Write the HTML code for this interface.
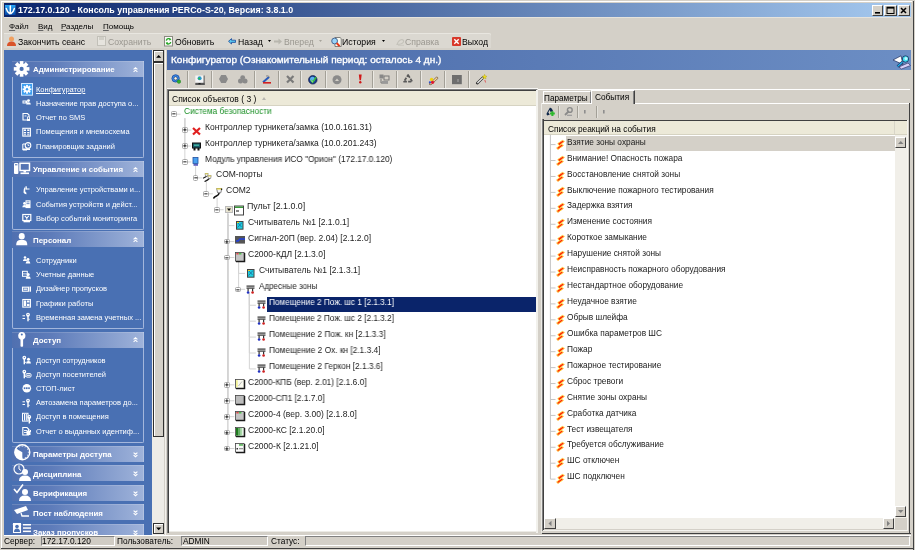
<!DOCTYPE html><html><head><meta charset="utf-8"><style>
*{box-sizing:border-box;margin:0;padding:0}
html,body{width:915px;height:550px;overflow:hidden}
body{position:relative;background:#d4d0c8;font-family:"Liberation Sans",sans-serif;color:#000}
.ab{position:absolute}
.t{position:absolute;white-space:nowrap;line-height:1;will-change:transform}
svg{position:absolute;overflow:visible}
</style></head><body>
<div class="ab" style="left:0px;top:0px;width:915px;height:550px;background:#d4d0c8"></div>
<div class="ab" style="left:1.3px;top:1.3px;width:911px;height:1.2px;background:#fff"></div>
<div class="ab" style="left:1.3px;top:1.3px;width:1.2px;height:547px;background:#fff"></div>
<div class="ab" style="left:913px;top:0.5px;width:1.2px;height:549px;background:#404040"></div>
<div class="ab" style="left:0.5px;top:548px;width:913px;height:1.3px;background:#404040"></div>
<div class="ab" style="left:3.6px;top:3.4px;width:907.4px;height:13.3px;background:linear-gradient(to right,#0a246a,#a6caf0)"></div>
<svg style="left:5.3px;top:4.9px" width="10.5" height="10" viewBox="0 0 10.5 10"><defs><linearGradient id="tg" x1="0" y1="0" x2="0" y2="1"><stop offset="0" stop-color="#28a8f8"/><stop offset="1" stop-color="#0648a8"/></linearGradient></defs><rect x="0" y="0" width="10.5" height="10" fill="url(#tg)"/><path d="M5.3 0.9 V8.6 M1.3 3.6 Q2.2 7.2 4.6 8.6 M9.3 3.6 Q8.4 7.2 6 8.6" stroke="#fff" stroke-width="1.5" fill="none" stroke-linecap="round"/></svg>
<div class="t" style="left:18px;top:5.61px;font-size:8.85px;font-weight:bold;color:#fff">172.17.0.120 - Консоль управления PERCo-S-20, Версия: 3.8.1.0</div>
<div class="ab" style="left:872px;top:4.7px;width:11px;height:11px;border-top:1px solid #fff;border-left:1px solid #fff;border-right:1px solid #404040;border-bottom:1px solid #404040;background:#d4d0c8"></div>
<div class="ab" style="left:884px;top:4.7px;width:12.5px;height:11px;border-top:1px solid #fff;border-left:1px solid #fff;border-right:1px solid #404040;border-bottom:1px solid #404040;background:#d4d0c8"></div>
<div class="ab" style="left:898px;top:4.7px;width:12px;height:11px;border-top:1px solid #fff;border-left:1px solid #fff;border-right:1px solid #404040;border-bottom:1px solid #404040;background:#d4d0c8"></div>
<svg style="left:872px;top:4.7px" width="38" height="11" viewBox="0 0 38 11"><rect x="3" y="7" width="5" height="1.6" fill="#000"/><rect x="15" y="2.2" width="7" height="6.3" fill="none" stroke="#000" stroke-width="1"/><rect x="15" y="2" width="7" height="1.6" fill="#000"/><path d="M29 3 L34 8 M34 3 L29 8" stroke="#000" stroke-width="1.5"/></svg>
<div class="t" style="left:8.9px;top:22.53px;font-size:8px;"><span style="text-decoration:underline;text-decoration-thickness:0.6px;text-underline-offset:1px;text-decoration-color:#666">Ф</span>айл</div>
<div class="t" style="left:37.7px;top:22.53px;font-size:8px;"><span style="text-decoration:underline;text-decoration-thickness:0.6px;text-underline-offset:1px;text-decoration-color:#666">В</span>ид</div>
<div class="t" style="left:61.3px;top:22.53px;font-size:8px;"><span style="text-decoration:underline;text-decoration-thickness:0.6px;text-underline-offset:1px;text-decoration-color:#666">Р</span>азделы</div>
<div class="t" style="left:102.6px;top:22.53px;font-size:8px;"><span style="text-decoration:underline;text-decoration-thickness:0.6px;text-underline-offset:1px;text-decoration-color:#666">П</span>омощь</div>
<div class="ab" style="left:4px;top:17px;width:907px;height:1.3px;background:#e6e3dc"></div>
<div class="ab" style="left:4px;top:33.3px;width:487px;height:15px;background:#dbd8d1;border-radius:0 2px 0 0;box-shadow:inset 0 1px 0 #e8e6e0"></div>
<div class="t" style="left:18px;top:37.64px;font-size:8.7px;color:#000">Закончить сеанс</div>
<div class="t" style="left:108px;top:37.64px;font-size:8.7px;color:#9a9790">Сохранить</div>
<div class="t" style="left:174.8px;top:37.64px;font-size:8.7px;color:#000">Обновить</div>
<div class="t" style="left:237.7px;top:37.64px;font-size:8.7px;color:#000">Назад</div>
<div class="t" style="left:284.2px;top:37.64px;font-size:8.7px;color:#9a9790">Вперед</div>
<div class="t" style="left:342.3px;top:37.64px;font-size:8.7px;color:#000">История</div>
<div class="t" style="left:405px;top:37.64px;font-size:8.7px;color:#9a9790">Справка</div>
<div class="t" style="left:461.6px;top:37.64px;font-size:8.7px;color:#000">Выход</div>
<svg style="left:7px;top:36px" width="9" height="11" viewBox="0 0 9 11"><circle cx="4.5" cy="3" r="2.5" fill="#f0a060"/><path d="M0 10 Q0 5.5 4.5 5.5 Q9 5.5 9 10 Z" fill="#d9532a"/></svg>
<svg style="left:97px;top:36px" width="9" height="10" viewBox="0 0 9 10"><rect x="0.5" y="0.5" width="8" height="9" fill="#e6e4de" stroke="#c2c0b8"/><rect x="2" y="1" width="5" height="3" fill="#d0cec6"/></svg>
<svg style="left:164px;top:36px" width="9" height="10.5" viewBox="0 0 9 10.5"><rect x="0.5" y="0.5" width="8" height="9.5" fill="#fbfbf8" stroke="#8a8a80"/><path d="M2.3 4.6 A2.4 2.4 0 0 1 6.6 3.6" stroke="#28a828" stroke-width="1.4" fill="none"/><path d="M6.7 6 A2.4 2.4 0 0 1 2.4 7" stroke="#28a828" stroke-width="1.4" fill="none"/><path d="M5.5 2.2 L7.4 3.8 L5.2 4.6Z M3.6 8.4 L1.6 6.8 L3.8 6Z" fill="#28a828"/></svg>
<svg style="left:227.8px;top:38.3px" width="8" height="7" viewBox="0 0 8 7"><path d="M0.5 3.3 L3.5 0.6 V2.2 H7.5 V4.4 H3.5 V6 Z" fill="#58c8f0" stroke="#1a4a9a" stroke-width="0.8" stroke-linejoin="round"/></svg>
<svg style="left:268px;top:40px" width="3" height="2" viewBox="0 0 3 2"><path d="M0 0 H3 L1.5 2 Z" fill="#000"/></svg>
<svg style="left:273.5px;top:38px" width="8" height="7" viewBox="0 0 8 7"><path d="M8 3.5 L4.5 0.5 V2.5 H0 V4.5 H4.5 V6.5 Z" fill="#b8b6ae"/></svg>
<svg style="left:318.5px;top:40px" width="3" height="2" viewBox="0 0 3 2"><path d="M0 0 H3 L1.5 2 Z" fill="#a7a49c"/></svg>
<svg style="left:330.5px;top:37px" width="11" height="10" viewBox="0 0 11 10"><path d="M4 0.5 H9 L10.2 1.5 V9.5 H4 Z" fill="#fafaf0" stroke="#555" stroke-width="0.7"/><circle cx="3.6" cy="4" r="2.9" fill="#9ad4f8" stroke="#3a5a8a" stroke-width="0.9"/><path d="M5.6 6 L8.6 9.2" stroke="#e83818" stroke-width="1.9"/></svg>
<svg style="left:381.5px;top:40px" width="3" height="2" viewBox="0 0 3 2"><path d="M0 0 H3 L1.5 2 Z" fill="#000"/></svg>
<svg style="left:395.5px;top:38px" width="9" height="8" viewBox="0 0 9 8"><path d="M1 6.5 Q2.5 2 6 1.5 Q8 2 7.5 4 Q6 6.5 1 6.5 Z" fill="none" stroke="#c4c2ba" stroke-width="1.1"/><path d="M2 7.3 H8" stroke="#c8c6be" stroke-width="0.9"/></svg>
<svg style="left:451.5px;top:36.5px" width="9" height="9" viewBox="0 0 9 9"><rect x="0" y="0" width="9" height="9" rx="1" fill="#d8382a"/><path d="M2.3 2.3 L6.7 6.7 M6.7 2.3 L2.3 6.7" stroke="#fff" stroke-width="1.4"/></svg>
<div class="ab" style="left:152.4px;top:49.6px;width:12.1px;height:485px;background:#eeece7"></div>
<div class="ab" style="left:152.8px;top:50.1px;width:11.6px;height:12.2px;border:1px solid #303030;background:#d4d0c8;box-shadow:inset 1px 1px 0 #fff"></div>
<svg style="left:152.8px;top:50.1px" width="12" height="12" viewBox="0 0 12 12"><path d="M3.1 7.7 H8.3 L5.7 5 Z" fill="#000"/></svg>
<div class="ab" style="left:152.8px;top:61.6px;width:11.6px;height:375.6px;border:1px solid #303030;border-top-width:1.3px;background:#d4d0c8;box-shadow:inset 1px 1px 0 #fff"></div>
<div class="ab" style="left:152.8px;top:522.7px;width:11.6px;height:11.8px;border:1px solid #303030;background:#d4d0c8;box-shadow:inset 1px 1px 0 #fff"></div>
<svg style="left:152.8px;top:522.7px" width="12" height="12" viewBox="0 0 12 12"><path d="M3.1 4.6 H8.3 L5.7 7.3 Z" fill="#000"/></svg>
<div class="ab" style="left:164.4px;top:49.6px;width:2.1px;height:485px;background:#d4d0c8"></div>
<div class="ab" style="left:164.9px;top:49.6px;width:1px;height:485px;background:#f4f2ee"></div>
<div class="ab" style="left:0;top:0;width:152.3px;height:534.7px;overflow:hidden">
<div class="ab" style="left:4px;top:49.6px;width:148.6px;height:485.1px;background:#4970b3"></div>
<div class="ab" style="left:12px;top:61px;width:132px;height:16.2px;background:linear-gradient(to right,#5070b0 0%,#5e7cba 30%,#9fb3da 100%);box-shadow:inset 0 1px 0 rgba(255,255,255,0.15),inset -1px 0 0 rgba(255,255,255,0.2)"></div>
<div class="t" style="left:33px;top:66.41px;font-size:7.9px;font-weight:bold;color:#fff">Администрирование</div>
<svg style="left:132.6px;top:66.8px" width="5" height="5.4" viewBox="0 0 5 5.4"><path d="M0.6 2.4 L2.5 0.7 L4.4 2.4 M0.6 4.9 L2.5 3.2 L4.4 4.9" stroke="#fff" stroke-width="1.15" fill="none"/></svg>
<div class="ab" style="left:12px;top:77.2px;width:132.3px;height:80.89999999999999px;border:1px solid #a3b6dc;border-top:none;border-radius:0 0 2px 2px"></div>
<div class="t" style="left:36px;top:85.85px;font-size:7.5px;color:#fff;text-decoration:underline">Конфигуратор</div>
<svg style="left:20.5px;top:83.1px" width="12" height="12.7" viewBox="0 0 12 12.7"><rect x="0.5" y="0.5" width="11" height="11.7" fill="#3d9ef0" stroke="#cfe6ff"/><g transform="translate(6,6.3)"><rect x="-0.9" y="-4.4" width="1.8" height="2" fill="#fff" transform="rotate(0)"/><rect x="-0.9" y="-4.4" width="1.8" height="2" fill="#fff" transform="rotate(45)"/><rect x="-0.9" y="-4.4" width="1.8" height="2" fill="#fff" transform="rotate(90)"/><rect x="-0.9" y="-4.4" width="1.8" height="2" fill="#fff" transform="rotate(135)"/><rect x="-0.9" y="-4.4" width="1.8" height="2" fill="#fff" transform="rotate(180)"/><rect x="-0.9" y="-4.4" width="1.8" height="2" fill="#fff" transform="rotate(225)"/><rect x="-0.9" y="-4.4" width="1.8" height="2" fill="#fff" transform="rotate(270)"/><rect x="-0.9" y="-4.4" width="1.8" height="2" fill="#fff" transform="rotate(315)"/><circle r="3" fill="#fff"/><circle r="1.2" fill="#3d9ef0"/></g></svg>
<div class="t" style="left:36px;top:100.02px;font-size:7.5px;color:#fff">Назначение прав доступа о...</div>
<svg style="left:21.8px;top:99.27000000000001px" width="10" height="9" viewBox="0 0 10 9"><rect x="0.5" y="1.5" width="5" height="3" fill="#fff"/><rect x="1.5" y="2.5" width="2" height="1" fill="#4970b3"/><circle cx="6.5" cy="1.6" r="1.4400000000000002" fill="#fff"/><path d="M4.16 5.5600000000000005 Q4.16 3.22 6.5 3.22 Q8.84 3.22 8.84 5.5600000000000005 Z" fill="#fff"/></svg>
<div class="t" style="left:36px;top:114.19px;font-size:7.5px;color:#fff">Отчет по SMS</div>
<svg style="left:21.8px;top:113.44000000000001px" width="10" height="9" viewBox="0 0 10 9"><path d="M1 0.5 H5.5 L7 2 V7 H1 Z" fill="none" stroke="#fff" stroke-width="1.1"/><rect x="2.5" y="2.5" width="2" height="0.9" fill="#fff"/><rect x="5" y="3.5" width="3" height="4.5" rx="0.6" fill="#fff"/><rect x="5.8" y="4.3" width="1.4" height="1.6" fill="#4970b3"/></svg>
<div class="t" style="left:36px;top:128.36px;font-size:7.5px;color:#fff">Помещения и мнемосхема</div>
<svg style="left:21.8px;top:127.61px" width="10" height="9" viewBox="0 0 10 9"><rect x="0.8" y="0.3" width="7.6" height="7.8" fill="none" stroke="#fff" stroke-width="1.1"/><rect x="1.8" y="1.4" width="2.2" height="1.6" fill="#fff"/><rect x="5.2" y="1.4" width="2.2" height="1.6" fill="#fff"/><rect x="1.8" y="4" width="2.2" height="1.4" fill="#fff"/><rect x="5.2" y="4" width="2.2" height="1.4" fill="#fff"/><rect x="1.8" y="6.3" width="2.2" height="1" fill="#fff"/><rect x="5.2" y="6.3" width="2.2" height="1" fill="#fff"/></svg>
<div class="t" style="left:36px;top:142.53px;font-size:7.5px;color:#fff">Планировщик заданий</div>
<svg style="left:21.8px;top:141.77999999999997px" width="10" height="9" viewBox="0 0 10 9"><path d="M0.8 2 H5 V8 H0.8 Z" fill="none" stroke="#fff" stroke-width="1"/><circle cx="6" cy="3.4" r="2.8" fill="#4970b3" stroke="#fff" stroke-width="1.1"/><path d="M6 1.8 V3.5 H7.3" stroke="#fff" stroke-width="0.8" fill="none"/><rect x="1" y="6.5" width="7" height="1.5" fill="#fff"/></svg>
<div class="ab" style="left:12px;top:161px;width:132px;height:16.2px;background:linear-gradient(to right,#5070b0 0%,#5e7cba 30%,#9fb3da 100%);box-shadow:inset 0 1px 0 rgba(255,255,255,0.15),inset -1px 0 0 rgba(255,255,255,0.2)"></div>
<div class="t" style="left:33px;top:166.41px;font-size:7.9px;font-weight:bold;color:#fff">Управление и события</div>
<svg style="left:132.6px;top:166.8px" width="5" height="5.4" viewBox="0 0 5 5.4"><path d="M0.6 2.4 L2.5 0.7 L4.4 2.4 M0.6 4.9 L2.5 3.2 L4.4 4.9" stroke="#fff" stroke-width="1.15" fill="none"/></svg>
<div class="ab" style="left:12px;top:177.2px;width:132.3px;height:52.400000000000006px;border:1px solid #a3b6dc;border-top:none;border-radius:0 0 2px 2px"></div>
<div class="t" style="left:36px;top:186.35px;font-size:7.5px;color:#fff">Управление устройствами и...</div>
<svg style="left:21.8px;top:185.59999999999997px" width="10" height="9" viewBox="0 0 10 9"><path d="M3.2 0.5 Q1 3 1.5 6.5 Q2.5 8.5 4.5 8.3 L4.3 6.5 Q3 6.3 3.2 4 Z" fill="#fff"/><path d="M3.5 3 H7.5" stroke="#fff" stroke-width="1"/><rect x="3.5" y="0.3" width="1.3" height="3" fill="#fff"/></svg>
<div class="t" style="left:36px;top:200.52px;font-size:7.5px;color:#fff">События устройств и дейст...</div>
<svg style="left:21.8px;top:199.76999999999995px" width="10" height="9" viewBox="0 0 10 9"><rect x="3.5" y="0.3" width="5" height="7.8" fill="#fff"/><rect x="4.5" y="1.5" width="3" height="0.8" fill="#4970b3"/><rect x="4.5" y="3.3" width="3" height="0.8" fill="#4970b3"/><circle cx="2.5" cy="3.4" r="1.36" fill="#fff"/><path d="M0.29000000000000004 7.140000000000001 Q0.29000000000000004 4.93 2.5 4.93 Q4.71 4.93 4.71 7.140000000000001 Z" fill="#fff"/></svg>
<div class="t" style="left:36px;top:214.69px;font-size:7.5px;color:#fff">Выбор событий мониторинга</div>
<svg style="left:21.8px;top:213.93999999999997px" width="10" height="9" viewBox="0 0 10 9"><rect x="0.8" y="0.5" width="8" height="6" fill="none" stroke="#fff" stroke-width="1.2"/><path d="M2.8 1.8 L4.8 4 L6.8 1.8 M4.8 4 V5.8" stroke="#fff" stroke-width="1.1" fill="none"/><rect x="1.5" y="7" width="6.5" height="1.3" fill="#fff"/></svg>
<div class="ab" style="left:12px;top:231.3px;width:132px;height:16.2px;background:linear-gradient(to right,#5070b0 0%,#5e7cba 30%,#9fb3da 100%);box-shadow:inset 0 1px 0 rgba(255,255,255,0.15),inset -1px 0 0 rgba(255,255,255,0.2)"></div>
<div class="t" style="left:33px;top:236.71px;font-size:7.9px;font-weight:bold;color:#fff">Персонал</div>
<svg style="left:132.6px;top:237.10000000000002px" width="5" height="5.4" viewBox="0 0 5 5.4"><path d="M0.6 2.4 L2.5 0.7 L4.4 2.4 M0.6 4.9 L2.5 3.2 L4.4 4.9" stroke="#fff" stroke-width="1.15" fill="none"/></svg>
<div class="ab" style="left:12px;top:247.5px;width:132.3px;height:81.30000000000001px;border:1px solid #a3b6dc;border-top:none;border-radius:0 0 2px 2px"></div>
<div class="t" style="left:36px;top:257.15px;font-size:7.5px;color:#fff">Сотрудники</div>
<svg style="left:21.8px;top:256.4px" width="10" height="9" viewBox="0 0 10 9"><circle cx="3" cy="1.5" r="1.2800000000000002" fill="#fff"/><path d="M0.9199999999999999 5.0200000000000005 Q0.9199999999999999 2.9400000000000004 3 2.9400000000000004 Q5.08 2.9400000000000004 5.08 5.0200000000000005 Z" fill="#fff"/><circle cx="6" cy="3.5" r="1.4400000000000002" fill="#fff"/><path d="M3.6599999999999997 7.460000000000001 Q3.6599999999999997 5.12 6 5.12 Q8.34 5.12 8.34 7.460000000000001 Z" fill="#fff"/></svg>
<div class="t" style="left:36px;top:271.32px;font-size:7.5px;color:#fff">Учетные данные</div>
<svg style="left:21.8px;top:270.57px" width="10" height="9" viewBox="0 0 10 9"><rect x="0.5" y="0.3" width="4.8" height="5" fill="none" stroke="#fff" stroke-width="1"/><rect x="0.8" y="2.5" width="4.2" height="0.8" fill="#fff"/><circle cx="6.2" cy="3.6" r="1.52" fill="#fff"/><path d="M3.7300000000000004 7.779999999999999 Q3.7300000000000004 5.3100000000000005 6.2 5.3100000000000005 Q8.67 5.3100000000000005 8.67 7.779999999999999 Z" fill="#fff"/></svg>
<div class="t" style="left:36px;top:285.49px;font-size:7.5px;color:#fff">Дизайнер пропусков</div>
<svg style="left:21.8px;top:284.73999999999995px" width="10" height="9" viewBox="0 0 10 9"><rect x="0.5" y="2.2" width="6" height="4" fill="none" stroke="#fff" stroke-width="1.1"/><rect x="1.5" y="3.5" width="4" height="1.3" fill="#fff"/><rect x="7.5" y="1.5" width="1.5" height="5.2" fill="#fff"/></svg>
<div class="t" style="left:36px;top:299.66px;font-size:7.5px;color:#fff">Графики работы</div>
<svg style="left:21.8px;top:298.90999999999997px" width="10" height="9" viewBox="0 0 10 9"><rect x="0.8" y="0.5" width="7.6" height="7.6" fill="none" stroke="#fff" stroke-width="1.1"/><rect x="1.8" y="1.5" width="2.4" height="5.5" fill="#fff"/><rect x="5" y="1.5" width="2.5" height="2" fill="#fff"/><rect x="5" y="4.8" width="2.5" height="2.2" fill="#fff"/></svg>
<div class="t" style="left:36px;top:313.83px;font-size:7.5px;color:#fff">Временная замена учетных ...</div>
<svg style="left:21.8px;top:313.08px" width="10" height="9" viewBox="0 0 10 9"><rect x="0.5" y="2.3" width="2.5" height="1" fill="#fff"/><rect x="0.5" y="5" width="2.5" height="1" fill="#fff"/><ellipse cx="6" cy="1.8" rx="1.9" ry="2" fill="#fff"/><circle cx="6" cy="1.4" r="0.55" fill="#4970b3"/><rect x="5.3" y="3" width="1.4" height="5.3" fill="#fff"/><rect x="6.5" y="5.8" width="1.1" height="1" fill="#fff"/></svg>
<div class="ab" style="left:12px;top:331.5px;width:132px;height:16.2px;background:linear-gradient(to right,#5070b0 0%,#5e7cba 30%,#9fb3da 100%);box-shadow:inset 0 1px 0 rgba(255,255,255,0.15),inset -1px 0 0 rgba(255,255,255,0.2)"></div>
<div class="t" style="left:33px;top:336.91px;font-size:7.9px;font-weight:bold;color:#fff">Доступ</div>
<svg style="left:132.6px;top:337.3px" width="5" height="5.4" viewBox="0 0 5 5.4"><path d="M0.6 2.4 L2.5 0.7 L4.4 2.4 M0.6 4.9 L2.5 3.2 L4.4 4.9" stroke="#fff" stroke-width="1.15" fill="none"/></svg>
<div class="ab" style="left:12px;top:347.7px;width:132.3px;height:95.40000000000003px;border:1px solid #a3b6dc;border-top:none;border-radius:0 0 2px 2px"></div>
<div class="t" style="left:36px;top:356.75px;font-size:7.5px;color:#fff">Доступ сотрудников</div>
<svg style="left:21.8px;top:356.0px" width="10" height="9" viewBox="0 0 10 9"><ellipse cx="2.3" cy="1.8" rx="1.9" ry="2" fill="#fff"/><circle cx="2.3" cy="1.4" r="0.55" fill="#4970b3"/><rect x="1.5999999999999999" y="3" width="1.4" height="5.3" fill="#fff"/><rect x="2.8" y="5.8" width="1.1" height="1" fill="#fff"/><circle cx="6.5" cy="3.2" r="1.52" fill="#fff"/><path d="M4.03 7.38 Q4.03 4.91 6.5 4.91 Q8.969999999999999 4.91 8.969999999999999 7.38 Z" fill="#fff"/></svg>
<div class="t" style="left:36px;top:370.92px;font-size:7.5px;color:#fff">Доступ посетителей</div>
<svg style="left:21.8px;top:370.17px" width="10" height="9" viewBox="0 0 10 9"><ellipse cx="2.3" cy="1.8" rx="1.9" ry="2" fill="#fff"/><circle cx="2.3" cy="1.4" r="0.55" fill="#4970b3"/><rect x="1.5999999999999999" y="3" width="1.4" height="5.3" fill="#fff"/><rect x="2.8" y="5.8" width="1.1" height="1" fill="#fff"/><rect x="4" y="3.6" width="5" height="3.5" rx="1" fill="none" stroke="#fff" stroke-width="1"/><rect x="5" y="4.8" width="3" height="1" fill="#fff"/></svg>
<div class="t" style="left:36px;top:385.09px;font-size:7.5px;color:#fff">СТОП-лист</div>
<svg style="left:21.8px;top:384.34px" width="10" height="9" viewBox="0 0 10 9"><circle cx="4.8" cy="4.2" r="4.3" fill="#fff"/><rect x="1.8" y="3.3" width="1.6" height="1.8" fill="#4970b3"/><rect x="4" y="3.3" width="1.6" height="1.8" fill="#4970b3"/><rect x="6.2" y="3.3" width="1.6" height="1.8" fill="#4970b3"/></svg>
<div class="t" style="left:36px;top:399.26px;font-size:7.5px;color:#fff">Автозамена параметров до...</div>
<svg style="left:21.8px;top:398.51px" width="10" height="9" viewBox="0 0 10 9"><rect x="0.5" y="2.3" width="2.5" height="1" fill="#fff"/><rect x="0.5" y="5" width="2.5" height="1" fill="#fff"/><ellipse cx="6" cy="1.8" rx="1.9" ry="2" fill="#fff"/><circle cx="6" cy="1.4" r="0.55" fill="#4970b3"/><rect x="5.3" y="3" width="1.4" height="5.3" fill="#fff"/><rect x="6.5" y="5.8" width="1.1" height="1" fill="#fff"/></svg>
<div class="t" style="left:36px;top:413.43px;font-size:7.5px;color:#fff">Доступ в помещения</div>
<svg style="left:21.8px;top:412.68px" width="10" height="9" viewBox="0 0 10 9"><rect x="0.5" y="0.3" width="5.5" height="7.8" fill="none" stroke="#fff" stroke-width="1"/><rect x="2" y="1" width="1" height="6.5" fill="#fff"/><rect x="3.8" y="1" width="1" height="6.5" fill="#fff"/><ellipse cx="7.3" cy="4.0" rx="1.9" ry="2" fill="#fff"/><circle cx="7.3" cy="3.6" r="0.55" fill="#4970b3"/><rect x="6.6" y="5.2" width="1.4" height="5.3" fill="#fff"/><rect x="7.8" y="8.0" width="1.1" height="1" fill="#fff"/></svg>
<div class="t" style="left:36px;top:427.60px;font-size:7.5px;color:#fff">Отчет о выданных идентиф...</div>
<svg style="left:21.8px;top:426.85px" width="10" height="9" viewBox="0 0 10 9"><path d="M0.8 0.5 H5 L6.5 2 V8 H0.8 Z" fill="none" stroke="#fff" stroke-width="1.1"/><rect x="2" y="3" width="3" height="0.9" fill="#fff"/><rect x="2" y="5" width="3" height="0.9" fill="#fff"/><path d="M5 4 H9 L7.5 2.5 M9 4 L7.5 5.5" stroke="#fff" stroke-width="1" fill="none"/><rect x="4.5" y="4" width="4" height="4" fill="#fff"/></svg>
<div class="ab" style="left:12px;top:445.7px;width:132px;height:16.2px;background:linear-gradient(to right,#5070b0 0%,#5e7cba 30%,#9fb3da 100%);box-shadow:inset 0 1px 0 rgba(255,255,255,0.15),inset -1px 0 0 rgba(255,255,255,0.2)"></div>
<div class="t" style="left:33px;top:451.11px;font-size:7.9px;font-weight:bold;color:#fff">Параметры доступа</div>
<svg style="left:132.6px;top:451.5px" width="5" height="5.4" viewBox="0 0 5 5.4"><path d="M0.6 0.6 L2.5 2.3 L4.4 0.6 M0.6 3.1 L2.5 4.8 L4.4 3.1" stroke="#fff" stroke-width="1.15" fill="none"/></svg>
<div class="ab" style="left:12px;top:465.2px;width:132px;height:16.2px;background:linear-gradient(to right,#5070b0 0%,#5e7cba 30%,#9fb3da 100%);box-shadow:inset 0 1px 0 rgba(255,255,255,0.15),inset -1px 0 0 rgba(255,255,255,0.2)"></div>
<div class="t" style="left:33px;top:470.61px;font-size:7.9px;font-weight:bold;color:#fff">Дисциплина</div>
<svg style="left:132.6px;top:471.0px" width="5" height="5.4" viewBox="0 0 5 5.4"><path d="M0.6 0.6 L2.5 2.3 L4.4 0.6 M0.6 3.1 L2.5 4.8 L4.4 3.1" stroke="#fff" stroke-width="1.15" fill="none"/></svg>
<div class="ab" style="left:12px;top:484.7px;width:132px;height:16.2px;background:linear-gradient(to right,#5070b0 0%,#5e7cba 30%,#9fb3da 100%);box-shadow:inset 0 1px 0 rgba(255,255,255,0.15),inset -1px 0 0 rgba(255,255,255,0.2)"></div>
<div class="t" style="left:33px;top:490.11px;font-size:7.9px;font-weight:bold;color:#fff">Верификация</div>
<svg style="left:132.6px;top:490.5px" width="5" height="5.4" viewBox="0 0 5 5.4"><path d="M0.6 0.6 L2.5 2.3 L4.4 0.6 M0.6 3.1 L2.5 4.8 L4.4 3.1" stroke="#fff" stroke-width="1.15" fill="none"/></svg>
<div class="ab" style="left:12px;top:504.2px;width:132px;height:16.2px;background:linear-gradient(to right,#5070b0 0%,#5e7cba 30%,#9fb3da 100%);box-shadow:inset 0 1px 0 rgba(255,255,255,0.15),inset -1px 0 0 rgba(255,255,255,0.2)"></div>
<div class="t" style="left:33px;top:509.61px;font-size:7.9px;font-weight:bold;color:#fff">Пост наблюдения</div>
<svg style="left:132.6px;top:510.0px" width="5" height="5.4" viewBox="0 0 5 5.4"><path d="M0.6 0.6 L2.5 2.3 L4.4 0.6 M0.6 3.1 L2.5 4.8 L4.4 3.1" stroke="#fff" stroke-width="1.15" fill="none"/></svg>
<div class="ab" style="left:12px;top:523.7px;width:132px;height:16.2px;background:linear-gradient(to right,#5070b0 0%,#5e7cba 30%,#9fb3da 100%);box-shadow:inset 0 1px 0 rgba(255,255,255,0.15),inset -1px 0 0 rgba(255,255,255,0.2)"></div>
<div class="t" style="left:33px;top:529.11px;font-size:7.9px;font-weight:bold;color:#fff">Заказ пропусков</div>
<svg style="left:132.6px;top:529.5px" width="5" height="5.4" viewBox="0 0 5 5.4"><path d="M0.6 0.6 L2.5 2.3 L4.4 0.6 M0.6 3.1 L2.5 4.8 L4.4 3.1" stroke="#fff" stroke-width="1.15" fill="none"/></svg>
<svg style="left:12px;top:59px" width="20" height="20" viewBox="0 0 20 20"><g transform="translate(9.6,9.9)"><rect x="-1.8" y="-7.8" width="3.6" height="4" fill="#fff" transform="rotate(0)"/><rect x="-1.8" y="-7.8" width="3.6" height="4" fill="#fff" transform="rotate(45)"/><rect x="-1.8" y="-7.8" width="3.6" height="4" fill="#fff" transform="rotate(90)"/><rect x="-1.8" y="-7.8" width="3.6" height="4" fill="#fff" transform="rotate(135)"/><rect x="-1.8" y="-7.8" width="3.6" height="4" fill="#fff" transform="rotate(180)"/><rect x="-1.8" y="-7.8" width="3.6" height="4" fill="#fff" transform="rotate(225)"/><rect x="-1.8" y="-7.8" width="3.6" height="4" fill="#fff" transform="rotate(270)"/><rect x="-1.8" y="-7.8" width="3.6" height="4" fill="#fff" transform="rotate(315)"/><circle r="5.4" fill="#fff"/><circle r="2.1" fill="#4970b3"/></g></svg>
<svg style="left:14px;top:162.6px" width="16" height="11.5" viewBox="0 0 16 11.5"><rect x="0" y="0" width="4.4" height="11" rx="1" fill="#fff"/><rect x="1" y="1.3" width="2.4" height="1" fill="#4970b3"/><rect x="6" y="0.3" width="9.5" height="7.2" fill="none" stroke="#fff" stroke-width="1.5"/><rect x="9.5" y="7.5" width="2.5" height="2" fill="#fff"/><rect x="6.5" y="9.5" width="8.5" height="1.6" fill="#fff"/></svg>
<svg style="left:16.3px;top:232.5px" width="11.5" height="12.5" viewBox="0 0 11.5 12.5"><ellipse cx="5.75" cy="3.3" rx="3" ry="3.3" fill="#fff"/><path d="M0.2 12.3 Q0 7.6 3.8 7 L7.7 7 Q11.5 7.6 11.3 12.3 Z" fill="#fff"/></svg>
<svg style="left:17.8px;top:331.5px" width="8" height="15" viewBox="0 0 8 15"><ellipse cx="3.8" cy="3.8" rx="3.6" ry="3.8" fill="#fff"/><circle cx="3.8" cy="2.6" r="1" fill="#4970b3"/><rect x="2.5" y="6.5" width="2.6" height="8.3" rx="0.8" fill="#fff"/></svg>
<svg style="left:13.5px;top:444.3px" width="17" height="17" viewBox="0 0 17 17"><circle cx="8.3" cy="8.2" r="7.5" fill="none" stroke="#fff" stroke-width="1.4"/><line x1="8.30" y1="2.60" x2="8.30" y2="1.60" stroke="#fff" stroke-width="0.9"/><line x1="11.10" y1="3.35" x2="11.60" y2="2.48" stroke="#fff" stroke-width="0.9"/><line x1="13.15" y1="5.40" x2="14.02" y2="4.90" stroke="#fff" stroke-width="0.9"/><line x1="13.90" y1="8.20" x2="14.90" y2="8.20" stroke="#fff" stroke-width="0.9"/><line x1="13.15" y1="11.00" x2="14.02" y2="11.50" stroke="#fff" stroke-width="0.9"/><line x1="11.10" y1="13.05" x2="11.60" y2="13.92" stroke="#fff" stroke-width="0.9"/><line x1="8.30" y1="13.80" x2="8.30" y2="14.80" stroke="#fff" stroke-width="0.9"/><line x1="5.50" y1="13.05" x2="5.00" y2="13.92" stroke="#fff" stroke-width="0.9"/><line x1="3.45" y1="11.00" x2="2.58" y2="11.50" stroke="#fff" stroke-width="0.9"/><line x1="2.70" y1="8.20" x2="1.70" y2="8.20" stroke="#fff" stroke-width="0.9"/><line x1="3.45" y1="5.40" x2="2.58" y2="4.90" stroke="#fff" stroke-width="0.9"/><line x1="5.50" y1="3.35" x2="5.00" y2="2.48" stroke="#fff" stroke-width="0.9"/><path d="M8.3 8.2 L8.3 15.7 A7.5 7.5 0 0 1 1.8 4.45 Z" fill="#fff"/></svg>
<svg style="left:13px;top:463px" width="19" height="19" viewBox="0 0 19 19"><circle cx="6" cy="6" r="5" fill="none" stroke="#fff" stroke-width="1.2"/><path d="M6 2.5 V6 L8 7.5" stroke="#fff" fill="none"/><circle cx="12" cy="9" r="3" fill="#fff"/><path d="M6 18 Q6 12.5 12 12.5 Q18 12.5 18 18 Z" fill="#fff"/></svg>
<svg style="left:13px;top:483px" width="19" height="19" viewBox="0 0 19 19"><path d="M1 6 L4 9.5 L10 1.5" stroke="#fff" stroke-width="1.6" fill="none"/><circle cx="12" cy="9" r="3" fill="#fff"/><path d="M6 18 Q6 12.5 12 12.5 Q18 12.5 18 18 Z" fill="#fff"/></svg>
<svg style="left:13px;top:505px" width="18" height="13" viewBox="0 0 18 13"><path d="M1 5 L13 1 L15 5 L4 9 Z" fill="#fff"/><path d="M8 8 L9 11 H16" stroke="#fff" fill="none" stroke-width="1.3"/></svg>
<svg style="left:13px;top:523px" width="18" height="11" viewBox="0 0 18 11"><rect x="0" y="0" width="8" height="10" fill="#fff"/><circle cx="4" cy="3.5" r="1.8" fill="#4970b3"/><path d="M1 9 Q1 5.5 4 5.5 Q7 5.5 7 9Z" fill="#4970b3"/><rect x="10" y="1" width="8" height="1.5" fill="#fff"/><rect x="10" y="4.3" width="8" height="1.5" fill="#fff"/><rect x="10" y="7.6" width="8" height="1.5" fill="#fff"/></svg>
</div>
<div class="ab" style="left:166.5px;top:49.6px;width:744.3px;height:20px;background:linear-gradient(to right,#4868a8,#6c8ec4)"></div>
<div class="t" style="left:170.8px;top:55.64px;font-size:8.7px;color:#fff;-webkit-text-stroke:0.3px #fff;transform:scaleX(1.155);transform-origin:0 0">Конфигуратор (Ознакомительный период: осталось 4 дн.)</div>
<svg style="left:892px;top:54.5px" width="19" height="14" viewBox="0 0 19 14"><path d="M7 12 L16 8 L18.5 10.5 L9.5 14 Z" fill="#d8d0f8" stroke="#2a2a5a" stroke-width="0.6"/><path d="M1 5 L9 0.8 L11 9.5 Z" fill="#fff" stroke="#1a2a5a" stroke-width="0.7"/><path d="M10.5 7 L5.5 11.5" stroke="#1a2a5a" stroke-width="2.4"/><path d="M10.5 7 L5.5 11.5" stroke="#20b8f0" stroke-width="1.2"/><circle cx="13.5" cy="4" r="3.2" fill="#40e0f0" stroke="#1a2a5a" stroke-width="0.8"/><circle cx="14" cy="3.5" r="1.5" fill="#c0f8ff"/></svg>
<div class="ab" style="left:166.5px;top:69.5px;width:745px;height:19px;background:#d4d0c8"></div>
<div class="ab" style="left:187.4px;top:71.3px;width:1px;height:16.8px;background:#a3a097"></div>
<div class="ab" style="left:188.4px;top:71.3px;width:0.8px;height:16.8px;background:#ebe9e4"></div>
<div class="ab" style="left:211.4px;top:71.3px;width:1px;height:16.8px;background:#a3a097"></div>
<div class="ab" style="left:212.4px;top:71.3px;width:0.8px;height:16.8px;background:#ebe9e4"></div>
<div class="ab" style="left:253.5px;top:71.3px;width:1px;height:16.8px;background:#a3a097"></div>
<div class="ab" style="left:254.5px;top:71.3px;width:0.8px;height:16.8px;background:#ebe9e4"></div>
<div class="ab" style="left:278px;top:71.3px;width:1px;height:16.8px;background:#a3a097"></div>
<div class="ab" style="left:279px;top:71.3px;width:0.8px;height:16.8px;background:#ebe9e4"></div>
<div class="ab" style="left:300.2px;top:71.3px;width:1px;height:16.8px;background:#a3a097"></div>
<div class="ab" style="left:301.2px;top:71.3px;width:0.8px;height:16.8px;background:#ebe9e4"></div>
<div class="ab" style="left:324.5px;top:71.3px;width:1px;height:16.8px;background:#a3a097"></div>
<div class="ab" style="left:325.5px;top:71.3px;width:0.8px;height:16.8px;background:#ebe9e4"></div>
<div class="ab" style="left:348.1px;top:71.3px;width:1px;height:16.8px;background:#a3a097"></div>
<div class="ab" style="left:349.1px;top:71.3px;width:0.8px;height:16.8px;background:#ebe9e4"></div>
<div class="ab" style="left:371.5px;top:71.3px;width:1px;height:16.8px;background:#a3a097"></div>
<div class="ab" style="left:372.5px;top:71.3px;width:0.8px;height:16.8px;background:#ebe9e4"></div>
<div class="ab" style="left:395.6px;top:71.3px;width:1px;height:16.8px;background:#a3a097"></div>
<div class="ab" style="left:396.6px;top:71.3px;width:0.8px;height:16.8px;background:#ebe9e4"></div>
<div class="ab" style="left:419.8px;top:71.3px;width:1px;height:16.8px;background:#a3a097"></div>
<div class="ab" style="left:420.8px;top:71.3px;width:0.8px;height:16.8px;background:#ebe9e4"></div>
<div class="ab" style="left:444px;top:71.3px;width:1px;height:16.8px;background:#a3a097"></div>
<div class="ab" style="left:445px;top:71.3px;width:0.8px;height:16.8px;background:#ebe9e4"></div>
<div class="ab" style="left:468.4px;top:71.3px;width:1px;height:16.8px;background:#a3a097"></div>
<div class="ab" style="left:469.4px;top:71.3px;width:0.8px;height:16.8px;background:#ebe9e4"></div>
<svg style="left:171.3px;top:74.4px" width="10" height="10" viewBox="0 0 10 10"><circle cx="4.6" cy="4.4" r="3.7" fill="#3a8ae8" stroke="#1a4aa0" stroke-width="0.8"/><circle cx="4.6" cy="4.4" r="1.7" fill="#fff4e0" stroke="#1a3a70" stroke-width="0.7"/><circle cx="7.9" cy="7.6" r="1.8" fill="#30b030" stroke="#1a7a1a" stroke-width="0.5"/></svg>
<svg style="left:195px;top:74.6px" width="10" height="10.5" viewBox="0 0 10 10.5"><rect x="0.3" y="0.5" width="8.5" height="7.5" fill="#f4f4f4"/><rect x="8.6" y="0.5" width="1" height="9.5" fill="#555"/><circle cx="4.6" cy="3.3" r="2" fill="#2a9ad0"/><circle cx="4.2" cy="3.6" r="1" fill="#30c040"/><rect x="0.3" y="7.8" width="9.3" height="2.2" fill="#555"/><rect x="3.5" y="8.2" width="2" height="1" fill="#111"/></svg>
<svg style="left:218.6px;top:75px" width="9" height="8" viewBox="0 0 9 8"><path d="M2.2 0 H6.8 L9 4 L6.8 8 H2.2 L0 4 Z" fill="#8a8a8a"/></svg>
<svg style="left:238.2px;top:74.5px" width="9.5" height="9" viewBox="0 0 9.5 9"><circle cx="4.7" cy="2.6" r="2.4" fill="#8a8a8a"/><circle cx="2.5" cy="6" r="2.5" fill="#8a8a8a"/><circle cx="7" cy="6" r="2.5" fill="#8a8a8a"/></svg>
<svg style="left:261.6px;top:74.6px" width="9" height="9" viewBox="0 0 9 9"><path d="M1 7.2 L7 2" stroke="#2a5ab8" stroke-width="2"/><path d="M4 1 Q7 0 7.5 2.5" stroke="#888" fill="none"/><rect x="1" y="7" width="8" height="1.6" fill="#d02020"/></svg>
<svg style="left:285.8px;top:75px" width="8.5" height="8.5" viewBox="0 0 8.5 8.5"><path d="M1 1 L7.5 7.5 M7.5 1 L1 7.5" stroke="#7a7a7a" stroke-width="2.2"/></svg>
<svg style="left:308px;top:74.5px" width="9.5" height="9.5" viewBox="0 0 9.5 9.5"><circle cx="4.8" cy="4.8" r="4.3" fill="#1a3a8a" stroke="#0a1a40" stroke-width="0.6"/><circle cx="4.5" cy="4.3" r="2.5" fill="#5ab0f0"/><path d="M3 5 L4.6 7.3 L8.2 2.3" stroke="#38c038" stroke-width="1.5" fill="none"/><path d="M3.5 5.5 L4.6 7.3" stroke="#fff" stroke-width="0.6"/></svg>
<svg style="left:331.7px;top:74.5px" width="10" height="9.5" viewBox="0 0 10 9.5"><circle cx="5" cy="4.8" r="4.5" fill="#8a8a8a"/><path d="M3 6 L5 3.5 L7 6 Z" fill="#d4d0c8"/></svg>
<svg style="left:358px;top:74px" width="4.5" height="10" viewBox="0 0 4.5 10"><path d="M0.8 0.5 H3.7 L3 6.3 H1.5 Z" fill="#d01818"/><circle cx="2.25" cy="8.3" r="1.2" fill="#d01818"/></svg>
<svg style="left:378.5px;top:74px" width="10.5" height="10" viewBox="0 0 10.5 10"><rect x="0.5" y="0.5" width="4" height="4" fill="#888"/><rect x="5" y="2" width="5" height="4" fill="none" stroke="#777"/><path d="M2 5 V9 H9" stroke="#777" fill="none"/><rect x="3" y="7" width="6" height="2.5" fill="#999"/></svg>
<svg style="left:402.6px;top:74.4px" width="10.2" height="8.6" viewBox="0 0 10.2 8.6"><path d="M5.1 1 L9.3 7.6 H0.9 Z" stroke="#5a5a5a" stroke-width="1.7" fill="none" stroke-linejoin="round" stroke-dasharray="3.2 1.2"/></svg>
<svg style="left:428.3px;top:75.5px" width="10.5" height="9" viewBox="0 0 10.5 9"><path d="M1 8.2 L8.3 1.2 Q9.8 0.8 10 2.3 L3 8.8 Z" fill="#eed2a0" stroke="#5a3a1a" stroke-width="0.6"/><circle cx="3.6" cy="3.4" r="1.7" fill="#f0d010"/><circle cx="4.6" cy="6.3" r="1.6" fill="#e01830"/><circle cx="1.9" cy="6.3" r="1.1" fill="#3050d0"/></svg>
<svg style="left:452px;top:74.6px" width="9.8" height="9.2" viewBox="0 0 9.8 9.2"><rect x="0" y="0" width="9.8" height="9.2" fill="#6e6e6e"/><rect x="5.5" y="4" width="1" height="3" fill="#aaa"/></svg>
<svg style="left:475.6px;top:74px" width="11" height="10.5" viewBox="0 0 11 10.5"><path d="M1.2 9.2 L7.2 3.4" stroke="#333" stroke-width="2.6" stroke-linecap="round"/><path d="M1.4 9 L7 3.6" stroke="#f4f4f4" stroke-width="1.2"/><path d="M8.6 0.3 L9.3 2 L11 2.3 L9.6 3.4 L10 5 L8.6 4.1 L7.3 5 L7.6 3.4 L6.3 2.3 L8 2 Z" fill="#f0e020" stroke="#b0a010" stroke-width="0.4"/><path d="M8.8 6 L9.6 8.5" stroke="#e04040" stroke-width="0.8"/></svg>
<div class="ab" style="left:166.5px;top:88px;width:371px;height:1px;background:#f8f7f4"></div>
<div class="ab" style="left:167.3px;top:89px;width:370px;height:1px;background:#808080"></div>
<div class="ab" style="left:168.3px;top:90px;width:369px;height:1px;background:#404040"></div>
<div class="ab" style="left:167.3px;top:89px;width:1px;height:444px;background:#808080"></div>
<div class="ab" style="left:168.3px;top:90px;width:1px;height:443px;background:#404040"></div>
<div class="ab" style="left:168.8px;top:90.5px;width:368.2px;height:15px;background:#ece9d8"></div>
<div class="ab" style="left:168.8px;top:105.5px;width:367.3px;height:425.4px;background:#fff"></div>
<div class="ab" style="left:168.8px;top:104.6px;width:367.3px;height:1px;background:#d6d3c2"></div>
<div class="ab" style="left:536.1px;top:90px;width:1.6px;height:443px;background:#f2f1ec"></div>
<div class="ab" style="left:168.8px;top:530.9px;width:368.7px;height:1.6px;background:#ecebe6"></div>
<div class="t" style="left:172.2px;top:95.40px;font-size:8.5px;">Список объектов ( 3 )</div>
<svg style="left:262.3px;top:96.6px" width="4" height="3" viewBox="0 0 4 3"><path d="M0 3 H4 L2 0 Z" fill="#b8b6b0"/></svg>
<svg style="left:0;top:0" width="915" height="550" viewBox="0 0 915 550"><line x1="174.10" y1="114.20" x2="180.60" y2="114.20" stroke="#d4d4d4" stroke-width="1"/><line x1="184.85" y1="130.12" x2="191.35" y2="130.12" stroke="#d4d4d4" stroke-width="1"/><line x1="184.85" y1="118.20" x2="184.85" y2="130.12" stroke="#d4d4d4" stroke-width="1"/><line x1="184.85" y1="146.04" x2="191.35" y2="146.04" stroke="#d4d4d4" stroke-width="1"/><line x1="184.85" y1="118.20" x2="184.85" y2="146.04" stroke="#d4d4d4" stroke-width="1"/><line x1="184.85" y1="161.96" x2="191.35" y2="161.96" stroke="#d4d4d4" stroke-width="1"/><line x1="184.85" y1="118.20" x2="184.85" y2="161.96" stroke="#d4d4d4" stroke-width="1"/><line x1="195.60" y1="177.88" x2="202.10" y2="177.88" stroke="#d4d4d4" stroke-width="1"/><line x1="195.60" y1="165.96" x2="195.60" y2="177.88" stroke="#d4d4d4" stroke-width="1"/><line x1="206.35" y1="193.80" x2="212.85" y2="193.80" stroke="#d4d4d4" stroke-width="1"/><line x1="206.35" y1="181.88" x2="206.35" y2="193.80" stroke="#d4d4d4" stroke-width="1"/><line x1="217.10" y1="209.72" x2="223.60" y2="209.72" stroke="#d4d4d4" stroke-width="1"/><line x1="217.10" y1="197.80" x2="217.10" y2="209.72" stroke="#d4d4d4" stroke-width="1"/><line x1="227.85" y1="225.64" x2="234.35" y2="225.64" stroke="#d4d4d4" stroke-width="1"/><line x1="227.85" y1="213.72" x2="227.85" y2="225.64" stroke="#d4d4d4" stroke-width="1"/><line x1="227.85" y1="241.56" x2="234.35" y2="241.56" stroke="#d4d4d4" stroke-width="1"/><line x1="227.85" y1="213.72" x2="227.85" y2="241.56" stroke="#d4d4d4" stroke-width="1"/><line x1="227.85" y1="257.48" x2="234.35" y2="257.48" stroke="#d4d4d4" stroke-width="1"/><line x1="227.85" y1="213.72" x2="227.85" y2="257.48" stroke="#d4d4d4" stroke-width="1"/><line x1="238.60" y1="273.40" x2="245.10" y2="273.40" stroke="#d4d4d4" stroke-width="1"/><line x1="238.60" y1="261.48" x2="238.60" y2="273.40" stroke="#d4d4d4" stroke-width="1"/><line x1="238.60" y1="289.32" x2="245.10" y2="289.32" stroke="#d4d4d4" stroke-width="1"/><line x1="238.60" y1="261.48" x2="238.60" y2="289.32" stroke="#d4d4d4" stroke-width="1"/><line x1="249.35" y1="305.24" x2="255.85" y2="305.24" stroke="#d4d4d4" stroke-width="1"/><line x1="249.35" y1="293.32" x2="249.35" y2="305.24" stroke="#d4d4d4" stroke-width="1"/><line x1="249.35" y1="321.16" x2="255.85" y2="321.16" stroke="#d4d4d4" stroke-width="1"/><line x1="249.35" y1="293.32" x2="249.35" y2="321.16" stroke="#d4d4d4" stroke-width="1"/><line x1="249.35" y1="337.08" x2="255.85" y2="337.08" stroke="#d4d4d4" stroke-width="1"/><line x1="249.35" y1="293.32" x2="249.35" y2="337.08" stroke="#d4d4d4" stroke-width="1"/><line x1="249.35" y1="353.00" x2="255.85" y2="353.00" stroke="#d4d4d4" stroke-width="1"/><line x1="249.35" y1="293.32" x2="249.35" y2="353.00" stroke="#d4d4d4" stroke-width="1"/><line x1="249.35" y1="368.92" x2="255.85" y2="368.92" stroke="#d4d4d4" stroke-width="1"/><line x1="249.35" y1="293.32" x2="249.35" y2="368.92" stroke="#d4d4d4" stroke-width="1"/><line x1="227.85" y1="384.84" x2="234.35" y2="384.84" stroke="#d4d4d4" stroke-width="1"/><line x1="227.85" y1="213.72" x2="227.85" y2="384.84" stroke="#d4d4d4" stroke-width="1"/><line x1="227.85" y1="400.76" x2="234.35" y2="400.76" stroke="#d4d4d4" stroke-width="1"/><line x1="227.85" y1="213.72" x2="227.85" y2="400.76" stroke="#d4d4d4" stroke-width="1"/><line x1="227.85" y1="416.68" x2="234.35" y2="416.68" stroke="#d4d4d4" stroke-width="1"/><line x1="227.85" y1="213.72" x2="227.85" y2="416.68" stroke="#d4d4d4" stroke-width="1"/><line x1="227.85" y1="432.60" x2="234.35" y2="432.60" stroke="#d4d4d4" stroke-width="1"/><line x1="227.85" y1="213.72" x2="227.85" y2="432.60" stroke="#d4d4d4" stroke-width="1"/><line x1="227.85" y1="448.52" x2="234.35" y2="448.52" stroke="#d4d4d4" stroke-width="1"/><line x1="227.85" y1="213.72" x2="227.85" y2="448.52" stroke="#d4d4d4" stroke-width="1"/></svg>
<div class="ab" style="left:171.45px;top:111.4px;width:5.8px;height:5.7px;border:1px solid #a8a8a8;background:#fff;border-radius:1.5px"></div>
<svg style="left:171.45px;top:111.4px" width="5.8" height="5.7" viewBox="0 0 5.8 5.7"><rect x="1.3" y="2.35" width="3.2" height="1" fill="#1a1a1a"/></svg>
<div class="t" style="left:184.3px;top:106.65px;font-size:8.5px;color:#1a8f25;transform:scaleX(0.9700996677740858);transform-origin:0 0">Система безопасности</div>
<div class="ab" style="left:182.04px;top:127.32000000000001px;width:5.8px;height:5.7px;border:1px solid #a8a8a8;background:#fff;border-radius:1.5px"></div>
<svg style="left:182.04px;top:127.32000000000001px" width="5.8" height="5.7" viewBox="0 0 5.8 5.7"><rect x="1.3" y="2.35" width="3.2" height="1" fill="#1a1a1a"/><rect x="2.4" y="1.25" width="1" height="3.2" fill="#1a1a1a"/></svg>
<svg style="left:192.25px;top:126.82000000000001px" width="9" height="8" viewBox="0 0 9 8"><path d="M1 1 L8 7.5 M8 1 L1 7.5" stroke="#e02020" stroke-width="2.2"/></svg>
<div class="t" style="left:204.95px;top:122.60px;font-size:8.5px;color:#1c1c1c">Контроллер турникета/замка (10.0.161.31)</div>
<div class="ab" style="left:182.04px;top:143.23999999999998px;width:5.8px;height:5.7px;border:1px solid #a8a8a8;background:#fff;border-radius:1.5px"></div>
<svg style="left:182.04px;top:143.23999999999998px" width="5.8" height="5.7" viewBox="0 0 5.8 5.7"><rect x="1.3" y="2.35" width="3.2" height="1" fill="#1a1a1a"/><rect x="2.4" y="1.25" width="1" height="3.2" fill="#1a1a1a"/></svg>
<svg style="left:192.25px;top:142.23999999999998px" width="9" height="9" viewBox="0 0 9 9"><rect x="0.5" y="1" width="8" height="5" fill="#1a5a6a" stroke="#111"/><rect x="1.5" y="6" width="2" height="2.5" fill="#111"/><rect x="5.5" y="6" width="2" height="2.5" fill="#111"/><rect x="2" y="2.5" width="5" height="1.5" fill="#40b0a0"/></svg>
<div class="t" style="left:204.95px;top:138.55px;font-size:8.5px;color:#1c1c1c">Контроллер турникета/замка (10.0.201.243)</div>
<div class="ab" style="left:182.04px;top:159.16px;width:5.8px;height:5.7px;border:1px solid #a8a8a8;background:#fff;border-radius:1.5px"></div>
<svg style="left:182.04px;top:159.16px" width="5.8" height="5.7" viewBox="0 0 5.8 5.7"><rect x="1.3" y="2.35" width="3.2" height="1" fill="#1a1a1a"/></svg>
<svg style="left:192.25px;top:157.16px" width="7" height="9" viewBox="0 0 7 9"><rect x="1" y="0.5" width="5" height="6" fill="#4aa0f0" stroke="#2050a0" stroke-width="0.8"/><rect x="1.5" y="7" width="4.5" height="1.8" fill="#6060c0"/></svg>
<div class="t" style="left:204.95px;top:154.50px;font-size:8.5px;color:#1c1c1c;transform:scaleX(0.9785900783289819);transform-origin:0 0">Модуль управления ИСО "Орион" (172.17.0.120)</div>
<div class="ab" style="left:192.63px;top:175.07999999999998px;width:5.8px;height:5.7px;border:1px solid #a8a8a8;background:#fff;border-radius:1.5px"></div>
<svg style="left:192.63px;top:175.07999999999998px" width="5.8" height="5.7" viewBox="0 0 5.8 5.7"><rect x="1.3" y="2.35" width="3.2" height="1" fill="#1a1a1a"/></svg>
<svg style="left:202.5px;top:173.27999999999997px" width="9.5" height="9" viewBox="0 0 9.5 9"><path d="M3.5 3.3 Q2 4.5 0.5 5 M6.3 5.5 Q4.5 7.5 2 8.3" stroke="#222" fill="none" stroke-width="1.3" stroke-linecap="round"/><path d="M2 0.5 H5.2 L4.6 3.3 H2.6 Z" fill="#f4f4f8" stroke="#666" stroke-width="0.6"/><rect x="2" y="0.4" width="3.2" height="0.9" fill="#e8d840"/><path d="M4.8 2.6 H8.2 L7.6 5.5 H5.4 Z" fill="#f4f4f8" stroke="#666" stroke-width="0.6"/><rect x="4.8" y="2.5" width="3.4" height="0.9" fill="#e8d840"/></svg>
<div class="t" style="left:215.7px;top:170.45px;font-size:8.5px;color:#1c1c1c">COM-порты</div>
<div class="ab" style="left:203.22px;top:191.0px;width:5.8px;height:5.7px;border:1px solid #a8a8a8;background:#fff;border-radius:1.5px"></div>
<svg style="left:203.22px;top:191.0px" width="5.8" height="5.7" viewBox="0 0 5.8 5.7"><rect x="1.3" y="2.35" width="3.2" height="1" fill="#1a1a1a"/></svg>
<svg style="left:213.45px;top:188.2px" width="10" height="10.5" viewBox="0 0 10 10.5"><path d="M6.2 4.8 Q6 7 3.5 8 Q1.5 8.8 0.8 10" stroke="#111" fill="none" stroke-width="1.5" stroke-linecap="round"/><path d="M3.6 0.5 H8.8 L7.8 4.8 H4.6 Z" fill="#f4f4f8" stroke="#555" stroke-width="0.7"/><rect x="3.6" y="0.3" width="5.2" height="1.2" fill="#e8d840"/><circle cx="8.6" cy="1.2" r="0.7" fill="#111"/></svg>
<div class="t" style="left:226.45px;top:186.40px;font-size:8.5px;color:#1c1c1c">COM2</div>
<div class="ab" style="left:213.80999999999997px;top:206.92px;width:5.8px;height:5.7px;border:1px solid #a8a8a8;background:#fff;border-radius:1.5px"></div>
<svg style="left:213.80999999999997px;top:206.92px" width="5.8" height="5.7" viewBox="0 0 5.8 5.7"><rect x="1.3" y="2.35" width="3.2" height="1" fill="#1a1a1a"/></svg>
<svg style="left:224.5px;top:205.92px" width="19" height="10" viewBox="0 0 19 10"><rect x="0.5" y="0.5" width="7" height="6" fill="#e8e4d0" stroke="#bbb"/><path d="M2 2.5 H6 L4 5 Z" fill="#111"/><rect x="9.5" y="0" width="9" height="9" fill="#fff" stroke="#444"/><rect x="10" y="0.5" width="8" height="1.5" fill="#3a9a3a"/><rect x="11" y="4" width="3" height="2" fill="#888"/></svg>
<div class="t" style="left:247.2px;top:202.35px;font-size:8.5px;color:#1c1c1c;transform:scaleX(1.0429338103756705);transform-origin:0 0">Пульт [2.1.0.0]</div>
<svg style="left:235.75px;top:221.03999999999996px" width="7.5" height="8.7" viewBox="0 0 7.5 8.7"><rect x="0.5" y="0.5" width="6.5" height="7.7" fill="#20d0e0" stroke="#444"/><path d="M1.5 6.5 L6 1.5 M2 2 L5.5 6" stroke="#1a7aaa"/><rect x="1" y="1" width="2" height="1" fill="#e8d020"/></svg>
<div class="t" style="left:247.95px;top:218.30px;font-size:8.5px;color:#1c1c1c">Считыватель №1 [2.1.0.1]</div>
<div class="ab" style="left:224.4px;top:238.76px;width:5.8px;height:5.7px;border:1px solid #a8a8a8;background:#fff;border-radius:1.5px"></div>
<svg style="left:224.4px;top:238.76px" width="5.8" height="5.7" viewBox="0 0 5.8 5.7"><rect x="1.3" y="2.35" width="3.2" height="1" fill="#1a1a1a"/><rect x="2.4" y="1.25" width="1" height="3.2" fill="#1a1a1a"/></svg>
<svg style="left:235.25px;top:236.26px" width="10" height="9" viewBox="0 0 10 9"><rect x="0" y="0" width="10" height="8" fill="#555"/><path d="M1 5 H3 L5 3 H10" stroke="#2040e0" stroke-width="1.5" fill="none"/><rect x="0" y="7" width="10" height="1" fill="#999"/></svg>
<div class="t" style="left:247.95px;top:234.25px;font-size:8.5px;color:#1c1c1c">Сигнал-20П (вер. 2.04) [2.1.2.0]</div>
<div class="ab" style="left:224.4px;top:254.68px;width:5.8px;height:5.7px;border:1px solid #a8a8a8;background:#fff;border-radius:1.5px"></div>
<svg style="left:224.4px;top:254.68px" width="5.8" height="5.7" viewBox="0 0 5.8 5.7"><rect x="1.3" y="2.35" width="3.2" height="1" fill="#1a1a1a"/></svg>
<svg style="left:235.25px;top:251.98000000000002px" width="10.5" height="10.2" viewBox="0 0 10.5 10.2"><rect x="0.5" y="0.5" width="8.6" height="8.6" fill="#c4c4c4" stroke="#444" stroke-width="0.8"/><rect x="1.3" y="1.2" width="2.4" height="1.2" fill="#e03030"/><rect x="4" y="1.2" width="2.4" height="1.2" fill="#30c030"/><path d="M9.6 1 V9.6 H1" stroke="#1a1a1a" stroke-width="1.3" fill="none"/></svg>
<div class="t" style="left:247.95px;top:250.20px;font-size:8.5px;color:#1c1c1c">С2000-КДЛ [2.1.3.0]</div>
<svg style="left:246.5px;top:268.79999999999995px" width="7.5" height="8.7" viewBox="0 0 7.5 8.7"><rect x="0.5" y="0.5" width="6.5" height="7.7" fill="#20d0e0" stroke="#444"/><path d="M1.5 6.5 L6 1.5 M2 2 L5.5 6" stroke="#1a7aaa"/><rect x="1" y="1" width="2" height="1" fill="#e8d020"/></svg>
<div class="t" style="left:258.7px;top:266.15px;font-size:8.5px;color:#1c1c1c">Считыватель №1 [2.1.3.1]</div>
<div class="ab" style="left:234.98999999999998px;top:286.52px;width:5.8px;height:5.7px;border:1px solid #a8a8a8;background:#fff;border-radius:1.5px"></div>
<svg style="left:234.98999999999998px;top:286.52px" width="5.8" height="5.7" viewBox="0 0 5.8 5.7"><rect x="1.3" y="2.35" width="3.2" height="1" fill="#1a1a1a"/></svg>
<svg style="left:246.0px;top:284.52px" width="9" height="9" viewBox="0 0 9 9"><rect x="0.5" y="0.5" width="8" height="1.2" fill="#333"/><rect x="0.5" y="2.5" width="8" height="1.2" fill="#333"/><rect x="1.5" y="3.5" width="1.2" height="3" fill="#333"/><rect x="6" y="3.5" width="1.2" height="3" fill="#333"/><circle cx="2.1" cy="7.5" r="1.3" fill="#2030c0"/><circle cx="6.6" cy="7.5" r="1.3" fill="#d02020"/></svg>
<div class="t" style="left:258.7px;top:282.10px;font-size:8.5px;color:#1c1c1c;transform:scaleX(0.9479674796747969);transform-origin:0 0">Адресные зоны</div>
<svg style="left:256.75px;top:300.44px" width="9" height="9" viewBox="0 0 9 9"><rect x="0.5" y="0.5" width="8" height="1.2" fill="#333"/><rect x="0.5" y="2.5" width="8" height="1.2" fill="#333"/><rect x="1.5" y="3.5" width="1.2" height="3" fill="#333"/><rect x="6" y="3.5" width="1.2" height="3" fill="#333"/><circle cx="2.1" cy="7.5" r="1.3" fill="#2030c0"/><circle cx="6.6" cy="7.5" r="1.3" fill="#d02020"/></svg>
<div class="ab" style="left:267.25px;top:297px;width:268.85px;height:15.3px;background:#0a246a"></div>
<div class="t" style="left:269.45px;top:298.05px;font-size:8.5px;color:#fff;transform:scaleX(0.968241673121611);transform-origin:0 0">Помещение 2 Пож. шс 1 [2.1.3.1]</div>
<svg style="left:256.75px;top:316.36px" width="9" height="9" viewBox="0 0 9 9"><rect x="0.5" y="0.5" width="8" height="1.2" fill="#333"/><rect x="0.5" y="2.5" width="8" height="1.2" fill="#333"/><rect x="1.5" y="3.5" width="1.2" height="3" fill="#333"/><rect x="6" y="3.5" width="1.2" height="3" fill="#333"/><circle cx="2.1" cy="7.5" r="1.3" fill="#2030c0"/><circle cx="6.6" cy="7.5" r="1.3" fill="#d02020"/></svg>
<div class="t" style="left:269.45px;top:314.00px;font-size:8.5px;color:#1c1c1c;transform:scaleX(0.968241673121611);transform-origin:0 0">Помещение 2 Пож. шс 2 [2.1.3.2]</div>
<svg style="left:256.75px;top:332.28px" width="9" height="9" viewBox="0 0 9 9"><rect x="0.5" y="0.5" width="8" height="1.2" fill="#333"/><rect x="0.5" y="2.5" width="8" height="1.2" fill="#333"/><rect x="1.5" y="3.5" width="1.2" height="3" fill="#333"/><rect x="6" y="3.5" width="1.2" height="3" fill="#333"/><circle cx="2.1" cy="7.5" r="1.3" fill="#2030c0"/><circle cx="6.6" cy="7.5" r="1.3" fill="#d02020"/></svg>
<div class="t" style="left:269.45px;top:329.95px;font-size:8.5px;color:#1c1c1c;transform:scaleX(0.9773679798826489);transform-origin:0 0">Помещение 2 Пож. кн [2.1.3.3]</div>
<svg style="left:256.75px;top:348.2px" width="9" height="9" viewBox="0 0 9 9"><rect x="0.5" y="0.5" width="8" height="1.2" fill="#333"/><rect x="0.5" y="2.5" width="8" height="1.2" fill="#333"/><rect x="1.5" y="3.5" width="1.2" height="3" fill="#333"/><rect x="6" y="3.5" width="1.2" height="3" fill="#333"/><circle cx="2.1" cy="7.5" r="1.3" fill="#2030c0"/><circle cx="6.6" cy="7.5" r="1.3" fill="#d02020"/></svg>
<div class="t" style="left:269.45px;top:345.90px;font-size:8.5px;color:#1c1c1c;transform:scaleX(0.9815303430079154);transform-origin:0 0">Помещение 2 Ох. кн [2.1.3.4]</div>
<svg style="left:256.75px;top:364.12px" width="9" height="9" viewBox="0 0 9 9"><rect x="0.5" y="0.5" width="8" height="1.2" fill="#333"/><rect x="0.5" y="2.5" width="8" height="1.2" fill="#333"/><rect x="1.5" y="3.5" width="1.2" height="3" fill="#333"/><rect x="6" y="3.5" width="1.2" height="3" fill="#333"/><circle cx="2.1" cy="7.5" r="1.3" fill="#2030c0"/><circle cx="6.6" cy="7.5" r="1.3" fill="#d02020"/></svg>
<div class="t" style="left:269.45px;top:361.85px;font-size:8.5px;color:#1c1c1c;transform:scaleX(0.9768240343347641);transform-origin:0 0">Помещение 2 Геркон [2.1.3.6]</div>
<div class="ab" style="left:224.4px;top:382.03999999999996px;width:5.8px;height:5.7px;border:1px solid #a8a8a8;background:#fff;border-radius:1.5px"></div>
<svg style="left:224.4px;top:382.03999999999996px" width="5.8" height="5.7" viewBox="0 0 5.8 5.7"><rect x="1.3" y="2.35" width="3.2" height="1" fill="#1a1a1a"/><rect x="2.4" y="1.25" width="1" height="3.2" fill="#1a1a1a"/></svg>
<svg style="left:235.25px;top:379.34px" width="10.5" height="10.2" viewBox="0 0 10.5 10.2"><rect x="0.5" y="0.5" width="8.6" height="8.6" fill="#fbfbf0" stroke="#444" stroke-width="0.8"/><rect x="1.2" y="1.2" width="1.4" height="7" fill="#f0f080"/><path d="M3.5 7 L7 2.5" stroke="#aaa" stroke-width="0.8"/><path d="M9.6 1 V9.6 H1" stroke="#1a1a1a" stroke-width="1.3" fill="none"/></svg>
<div class="t" style="left:247.95px;top:377.80px;font-size:8.5px;color:#1c1c1c;transform:scaleX(0.9817880794701987);transform-origin:0 0">С2000-КПБ (вер. 2.01) [2.1.6.0]</div>
<div class="ab" style="left:224.4px;top:397.96px;width:5.8px;height:5.7px;border:1px solid #a8a8a8;background:#fff;border-radius:1.5px"></div>
<svg style="left:224.4px;top:397.96px" width="5.8" height="5.7" viewBox="0 0 5.8 5.7"><rect x="1.3" y="2.35" width="3.2" height="1" fill="#1a1a1a"/><rect x="2.4" y="1.25" width="1" height="3.2" fill="#1a1a1a"/></svg>
<svg style="left:235.25px;top:395.26px" width="10.5" height="10.2" viewBox="0 0 10.5 10.2"><rect x="0.5" y="0.5" width="8.6" height="8.6" fill="#bcbcbc" stroke="#444" stroke-width="0.8"/><path d="M9.6 1 V9.6 H1" stroke="#1a1a1a" stroke-width="1.3" fill="none"/></svg>
<div class="t" style="left:247.95px;top:393.75px;font-size:8.5px;color:#1c1c1c;transform:scaleX(0.9846153846153848);transform-origin:0 0">С2000-СП1 [2.1.7.0]</div>
<div class="ab" style="left:224.4px;top:413.88px;width:5.8px;height:5.7px;border:1px solid #a8a8a8;background:#fff;border-radius:1.5px"></div>
<svg style="left:224.4px;top:413.88px" width="5.8" height="5.7" viewBox="0 0 5.8 5.7"><rect x="1.3" y="2.35" width="3.2" height="1" fill="#1a1a1a"/><rect x="2.4" y="1.25" width="1" height="3.2" fill="#1a1a1a"/></svg>
<svg style="left:235.25px;top:411.18px" width="10.5" height="10.2" viewBox="0 0 10.5 10.2"><rect x="0.5" y="0.5" width="8.6" height="8.6" fill="#c4c4c4" stroke="#444" stroke-width="0.8"/><rect x="1.3" y="1.2" width="2.4" height="1.2" fill="#e03030"/><rect x="4" y="1.2" width="2.4" height="1.2" fill="#30c030"/><path d="M9.6 1 V9.6 H1" stroke="#1a1a1a" stroke-width="1.3" fill="none"/></svg>
<div class="t" style="left:247.95px;top:409.70px;font-size:8.5px;color:#1c1c1c">С2000-4 (вер. 3.00) [2.1.8.0]</div>
<div class="ab" style="left:224.4px;top:429.79999999999995px;width:5.8px;height:5.7px;border:1px solid #a8a8a8;background:#fff;border-radius:1.5px"></div>
<svg style="left:224.4px;top:429.79999999999995px" width="5.8" height="5.7" viewBox="0 0 5.8 5.7"><rect x="1.3" y="2.35" width="3.2" height="1" fill="#1a1a1a"/><rect x="2.4" y="1.25" width="1" height="3.2" fill="#1a1a1a"/></svg>
<svg style="left:235.25px;top:427.09999999999997px" width="10.5" height="10.2" viewBox="0 0 10.5 10.2"><rect x="0.5" y="0.5" width="8.6" height="8.6" fill="#e8f4e8" stroke="#444" stroke-width="0.8"/><rect x="1" y="1" width="2.6" height="7.6" fill="#1e7a1e"/><rect x="3.6" y="1" width="2" height="7.6" fill="#60b060"/><rect x="5.6" y="1" width="1.5" height="7.6" fill="#a8d8a8"/><path d="M9.6 1 V9.6 H1" stroke="#1a1a1a" stroke-width="1.3" fill="none"/></svg>
<div class="t" style="left:247.95px;top:425.65px;font-size:8.5px;color:#1c1c1c">С2000-КС [2.1.20.0]</div>
<div class="ab" style="left:224.4px;top:445.71999999999997px;width:5.8px;height:5.7px;border:1px solid #a8a8a8;background:#fff;border-radius:1.5px"></div>
<svg style="left:224.4px;top:445.71999999999997px" width="5.8" height="5.7" viewBox="0 0 5.8 5.7"><rect x="1.3" y="2.35" width="3.2" height="1" fill="#1a1a1a"/><rect x="2.4" y="1.25" width="1" height="3.2" fill="#1a1a1a"/></svg>
<svg style="left:235.25px;top:443.02px" width="10.5" height="10.2" viewBox="0 0 10.5 10.2"><rect x="0.5" y="0.5" width="8.6" height="8.6" fill="#fafafa" stroke="#444" stroke-width="0.8"/><rect x="4" y="1.3" width="4" height="1.3" fill="#30a030"/><rect x="1.5" y="5" width="1.5" height="1.5" fill="#333"/><rect x="4" y="5" width="4" height="1.3" fill="#999"/><path d="M9.6 1 V9.6 H1" stroke="#1a1a1a" stroke-width="1.3" fill="none"/></svg>
<div class="t" style="left:247.95px;top:441.60px;font-size:8.5px;color:#1c1c1c">С2000-К [2.1.21.0]</div>
<div class="ab" style="left:537.5px;top:88.8px;width:372.5px;height:1px;background:#fff"></div>
<div class="ab" style="left:541.5px;top:103.3px;width:368.5px;height:1px;background:#fff"></div>
<div class="ab" style="left:541.3px;top:103.3px;width:1px;height:430px;background:#ecebe6"></div>
<div class="ab" style="left:909.2px;top:103.4px;width:1.3px;height:430.4px;background:#404040"></div>
<div class="ab" style="left:541.5px;top:532.6px;width:369px;height:1.2px;background:#404040"></div>
<div class="ab" style="left:542.6px;top:91.2px;width:48.4px;height:12.3px;border-top:1px solid #fff;border-left:1px solid #fff;border-right:1px solid #808080;background:#d4d0c8"></div>
<div class="ab" style="left:590.5px;top:89.5px;width:44px;height:14.3px;border-top:1px solid #fff;border-left:1px solid #fff;border-right:1px solid #404040;background:#d4d0c8;box-shadow:inset -1px 0 0 #808080"></div>
<div class="t" style="left:544.4px;top:94.86px;font-size:8.2px;">Параметры</div>
<div class="t" style="left:594.9px;top:93.27px;font-size:8.3px;">События</div>
<div class="ab" style="left:558.4px;top:106px;width:1px;height:12px;background:#a3a097"></div>
<div class="ab" style="left:559.4px;top:106px;width:0.8px;height:12px;background:#e4e2dc"></div>
<div class="ab" style="left:576.5px;top:106px;width:1px;height:12px;background:#a3a097"></div>
<div class="ab" style="left:577.5px;top:106px;width:0.8px;height:12px;background:#e4e2dc"></div>
<div class="ab" style="left:595.5px;top:106px;width:1px;height:12px;background:#a3a097"></div>
<div class="ab" style="left:596.5px;top:106px;width:0.8px;height:12px;background:#e4e2dc"></div>
<svg style="left:545.8px;top:106.8px" width="9.5" height="9.5" viewBox="0 0 9.5 9.5"><path d="M3.8 0.8 Q5 0.5 6 2 L7.2 4.2 L4.6 5 L3.6 3 L2.3 5.5 L3.8 7.5 L1.5 8.6 Q0.3 8 0.6 6.6 Z" fill="#10284a"/><path d="M6.4 4.2 V8.9 M4 6.55 H8.8" stroke="#2cb82c" stroke-width="2.1"/></svg>
<svg style="left:564px;top:107px" width="9" height="9" viewBox="0 0 9 9"><path d="M1 8 L5 4" stroke="#8a8a8a" stroke-width="1.8"/><circle cx="5.8" cy="3" r="2.4" fill="none" stroke="#8a8a8a" stroke-width="1.4"/><path d="M3 8.3 H8" stroke="#9a9a9a" stroke-width="1.2"/></svg>
<svg style="left:584.3px;top:110px" width="2" height="4" viewBox="0 0 2 4"><rect width="1.6" height="3.5" fill="#8e8e8e"/></svg>
<svg style="left:603.2px;top:110px" width="2" height="4" viewBox="0 0 2 4"><rect width="1.6" height="3.5" fill="#8e8e8e"/></svg>
<div class="ab" style="left:542.3px;top:119.6px;width:364.5px;height:1.2px;background:#404040"></div>
<div class="ab" style="left:542.3px;top:119.4px;width:1px;height:412px;background:#808080"></div>
<div class="ab" style="left:543.1px;top:119.4px;width:1px;height:412px;background:#404040"></div>
<div class="ab" style="left:544px;top:120.8px;width:362.6px;height:13.9px;background:#ece9d8"></div>
<div class="ab" style="left:893.5px;top:121px;width:1px;height:13px;background:#d8d5c8"></div>
<div class="ab" style="left:544px;top:134.7px;width:350.5px;height:383.1px;background:#fff"></div>
<div class="ab" style="left:544px;top:133.9px;width:362.6px;height:0.9px;background:#d6d3c2"></div>
<div class="ab" style="left:906.6px;top:119.6px;width:1.2px;height:411px;background:#f4f3ef"></div>
<div class="ab" style="left:543.1px;top:529.8px;width:364.7px;height:1.2px;background:#f4f3ef"></div>
<div class="t" style="left:547.9px;top:124.77px;font-size:8.3px;">Список реакций на события</div>
<div class="ab" style="left:894.5px;top:134.7px;width:12.5px;height:383.1px;background:#f1efe9"></div>
<div class="ab" style="left:894.5px;top:136.6px;width:11.5px;height:11px;border-top:1px solid #fff;border-left:1px solid #fff;border-right:1px solid #404040;border-bottom:1px solid #404040;background:#d4d0c8"></div>
<svg style="left:894.5px;top:136.6px" width="11.5" height="11" viewBox="0 0 11.5 11"><path d="M3 7 H8.5 L5.75 4 Z" fill="#808080"/></svg>
<div class="ab" style="left:894.5px;top:505.8px;width:11.5px;height:11px;border-top:1px solid #fff;border-left:1px solid #fff;border-right:1px solid #404040;border-bottom:1px solid #404040;background:#d4d0c8"></div>
<svg style="left:894.5px;top:505.8px" width="11.5" height="11" viewBox="0 0 11.5 11"><path d="M3 4 H8.5 L5.75 7 Z" fill="#808080"/></svg>
<div class="ab" style="left:544px;top:517.8px;width:350.5px;height:11.2px;background:#f1efe9"></div>
<div class="ab" style="left:544px;top:517.8px;width:12.3px;height:11.2px;border-top:1px solid #fff;border-left:1px solid #fff;border-right:1px solid #404040;border-bottom:1px solid #404040;background:#d4d0c8"></div>
<svg style="left:544px;top:517.8px" width="12" height="11" viewBox="0 0 12 11"><path d="M7.5 2.7 V8.3 L4.5 5.5 Z" fill="#808080"/></svg>
<div class="ab" style="left:883px;top:517.8px;width:11.2px;height:11.2px;border-top:1px solid #fff;border-left:1px solid #fff;border-right:1px solid #404040;border-bottom:1px solid #404040;background:#d4d0c8"></div>
<svg style="left:883px;top:517.8px" width="11" height="11" viewBox="0 0 11 11"><path d="M4 2.7 V8.3 L7 5.5 Z" fill="#808080"/></svg>
<div class="ab" style="left:894.5px;top:517.8px;width:12.5px;height:11.5px;background:#d4d0c8"></div>
<div class="ab" style="left:565.6px;top:135.7px;width:329px;height:15.7px;background:#d4d0c8"></div>
<svg style="left:556px;top:139.7px" width="9" height="10" viewBox="0 0 9 10"><path d="M1.8 3.6 L6.4 0.4 L8.4 1.4 L3.2 5.6 Z M0.6 8 L5.4 4.4 L7.4 5.4 L2.0 9.4 Z" fill="#ff2010" stroke="#ffcf30" stroke-width="0.9" stroke-linejoin="round"/></svg>
<div class="t" style="left:566.6px;top:137.77px;font-size:8.3px;color:#1a1a1a">Взятие зоны охраны</div>
<svg style="left:556px;top:155.63px" width="9" height="10" viewBox="0 0 9 10"><path d="M1.8 3.6 L6.4 0.4 L8.4 1.4 L3.2 5.6 Z M0.6 8 L5.4 4.4 L7.4 5.4 L2.0 9.4 Z" fill="#ff2010" stroke="#ffcf30" stroke-width="0.9" stroke-linejoin="round"/></svg>
<div class="t" style="left:566.6px;top:153.70px;font-size:8.3px;color:#1a1a1a">Внимание! Опасность пожара</div>
<svg style="left:556px;top:171.55999999999997px" width="9" height="10" viewBox="0 0 9 10"><path d="M1.8 3.6 L6.4 0.4 L8.4 1.4 L3.2 5.6 Z M0.6 8 L5.4 4.4 L7.4 5.4 L2.0 9.4 Z" fill="#ff2010" stroke="#ffcf30" stroke-width="0.9" stroke-linejoin="round"/></svg>
<div class="t" style="left:566.6px;top:169.63px;font-size:8.3px;color:#1a1a1a">Восстановление снятой зоны</div>
<svg style="left:556px;top:187.48999999999998px" width="9" height="10" viewBox="0 0 9 10"><path d="M1.8 3.6 L6.4 0.4 L8.4 1.4 L3.2 5.6 Z M0.6 8 L5.4 4.4 L7.4 5.4 L2.0 9.4 Z" fill="#ff2010" stroke="#ffcf30" stroke-width="0.9" stroke-linejoin="round"/></svg>
<div class="t" style="left:566.6px;top:185.56px;font-size:8.3px;color:#1a1a1a">Выключение пожарного тестирования</div>
<svg style="left:556px;top:203.42px" width="9" height="10" viewBox="0 0 9 10"><path d="M1.8 3.6 L6.4 0.4 L8.4 1.4 L3.2 5.6 Z M0.6 8 L5.4 4.4 L7.4 5.4 L2.0 9.4 Z" fill="#ff2010" stroke="#ffcf30" stroke-width="0.9" stroke-linejoin="round"/></svg>
<div class="t" style="left:566.6px;top:201.49px;font-size:8.3px;color:#1a1a1a">Задержка взятия</div>
<svg style="left:556px;top:219.35px" width="9" height="10" viewBox="0 0 9 10"><path d="M1.8 3.6 L6.4 0.4 L8.4 1.4 L3.2 5.6 Z M0.6 8 L5.4 4.4 L7.4 5.4 L2.0 9.4 Z" fill="#ff2010" stroke="#ffcf30" stroke-width="0.9" stroke-linejoin="round"/></svg>
<div class="t" style="left:566.6px;top:217.42px;font-size:8.3px;color:#1a1a1a">Изменение состояния</div>
<svg style="left:556px;top:235.28px" width="9" height="10" viewBox="0 0 9 10"><path d="M1.8 3.6 L6.4 0.4 L8.4 1.4 L3.2 5.6 Z M0.6 8 L5.4 4.4 L7.4 5.4 L2.0 9.4 Z" fill="#ff2010" stroke="#ffcf30" stroke-width="0.9" stroke-linejoin="round"/></svg>
<div class="t" style="left:566.6px;top:233.35px;font-size:8.3px;color:#1a1a1a">Короткое замыкание</div>
<svg style="left:556px;top:251.20999999999998px" width="9" height="10" viewBox="0 0 9 10"><path d="M1.8 3.6 L6.4 0.4 L8.4 1.4 L3.2 5.6 Z M0.6 8 L5.4 4.4 L7.4 5.4 L2.0 9.4 Z" fill="#ff2010" stroke="#ffcf30" stroke-width="0.9" stroke-linejoin="round"/></svg>
<div class="t" style="left:566.6px;top:249.28px;font-size:8.3px;color:#1a1a1a">Нарушение снятой зоны</div>
<svg style="left:556px;top:267.14px" width="9" height="10" viewBox="0 0 9 10"><path d="M1.8 3.6 L6.4 0.4 L8.4 1.4 L3.2 5.6 Z M0.6 8 L5.4 4.4 L7.4 5.4 L2.0 9.4 Z" fill="#ff2010" stroke="#ffcf30" stroke-width="0.9" stroke-linejoin="round"/></svg>
<div class="t" style="left:566.6px;top:265.21px;font-size:8.3px;color:#1a1a1a">Неисправность пожарного оборудования</div>
<svg style="left:556px;top:283.07000000000005px" width="9" height="10" viewBox="0 0 9 10"><path d="M1.8 3.6 L6.4 0.4 L8.4 1.4 L3.2 5.6 Z M0.6 8 L5.4 4.4 L7.4 5.4 L2.0 9.4 Z" fill="#ff2010" stroke="#ffcf30" stroke-width="0.9" stroke-linejoin="round"/></svg>
<div class="t" style="left:566.6px;top:281.14px;font-size:8.3px;color:#1a1a1a">Нестандартное оборудование</div>
<svg style="left:556px;top:299.0px" width="9" height="10" viewBox="0 0 9 10"><path d="M1.8 3.6 L6.4 0.4 L8.4 1.4 L3.2 5.6 Z M0.6 8 L5.4 4.4 L7.4 5.4 L2.0 9.4 Z" fill="#ff2010" stroke="#ffcf30" stroke-width="0.9" stroke-linejoin="round"/></svg>
<div class="t" style="left:566.6px;top:297.07px;font-size:8.3px;color:#1a1a1a">Неудачное взятие</div>
<svg style="left:556px;top:314.93px" width="9" height="10" viewBox="0 0 9 10"><path d="M1.8 3.6 L6.4 0.4 L8.4 1.4 L3.2 5.6 Z M0.6 8 L5.4 4.4 L7.4 5.4 L2.0 9.4 Z" fill="#ff2010" stroke="#ffcf30" stroke-width="0.9" stroke-linejoin="round"/></svg>
<div class="t" style="left:566.6px;top:313.00px;font-size:8.3px;color:#1a1a1a">Обрыв шлейфа</div>
<svg style="left:556px;top:330.86px" width="9" height="10" viewBox="0 0 9 10"><path d="M1.8 3.6 L6.4 0.4 L8.4 1.4 L3.2 5.6 Z M0.6 8 L5.4 4.4 L7.4 5.4 L2.0 9.4 Z" fill="#ff2010" stroke="#ffcf30" stroke-width="0.9" stroke-linejoin="round"/></svg>
<div class="t" style="left:566.6px;top:328.93px;font-size:8.3px;color:#1a1a1a">Ошибка параметров ШС</div>
<svg style="left:556px;top:346.79px" width="9" height="10" viewBox="0 0 9 10"><path d="M1.8 3.6 L6.4 0.4 L8.4 1.4 L3.2 5.6 Z M0.6 8 L5.4 4.4 L7.4 5.4 L2.0 9.4 Z" fill="#ff2010" stroke="#ffcf30" stroke-width="0.9" stroke-linejoin="round"/></svg>
<div class="t" style="left:566.6px;top:344.86px;font-size:8.3px;color:#1a1a1a">Пожар</div>
<svg style="left:556px;top:362.72px" width="9" height="10" viewBox="0 0 9 10"><path d="M1.8 3.6 L6.4 0.4 L8.4 1.4 L3.2 5.6 Z M0.6 8 L5.4 4.4 L7.4 5.4 L2.0 9.4 Z" fill="#ff2010" stroke="#ffcf30" stroke-width="0.9" stroke-linejoin="round"/></svg>
<div class="t" style="left:566.6px;top:360.79px;font-size:8.3px;color:#1a1a1a">Пожарное тестирование</div>
<svg style="left:556px;top:378.65px" width="9" height="10" viewBox="0 0 9 10"><path d="M1.8 3.6 L6.4 0.4 L8.4 1.4 L3.2 5.6 Z M0.6 8 L5.4 4.4 L7.4 5.4 L2.0 9.4 Z" fill="#ff2010" stroke="#ffcf30" stroke-width="0.9" stroke-linejoin="round"/></svg>
<div class="t" style="left:566.6px;top:376.72px;font-size:8.3px;color:#1a1a1a">Сброс тревоги</div>
<svg style="left:556px;top:394.58000000000004px" width="9" height="10" viewBox="0 0 9 10"><path d="M1.8 3.6 L6.4 0.4 L8.4 1.4 L3.2 5.6 Z M0.6 8 L5.4 4.4 L7.4 5.4 L2.0 9.4 Z" fill="#ff2010" stroke="#ffcf30" stroke-width="0.9" stroke-linejoin="round"/></svg>
<div class="t" style="left:566.6px;top:392.65px;font-size:8.3px;color:#1a1a1a">Снятие зоны охраны</div>
<svg style="left:556px;top:410.51px" width="9" height="10" viewBox="0 0 9 10"><path d="M1.8 3.6 L6.4 0.4 L8.4 1.4 L3.2 5.6 Z M0.6 8 L5.4 4.4 L7.4 5.4 L2.0 9.4 Z" fill="#ff2010" stroke="#ffcf30" stroke-width="0.9" stroke-linejoin="round"/></svg>
<div class="t" style="left:566.6px;top:408.58px;font-size:8.3px;color:#1a1a1a">Сработка датчика</div>
<svg style="left:556px;top:426.44000000000005px" width="9" height="10" viewBox="0 0 9 10"><path d="M1.8 3.6 L6.4 0.4 L8.4 1.4 L3.2 5.6 Z M0.6 8 L5.4 4.4 L7.4 5.4 L2.0 9.4 Z" fill="#ff2010" stroke="#ffcf30" stroke-width="0.9" stroke-linejoin="round"/></svg>
<div class="t" style="left:566.6px;top:424.51px;font-size:8.3px;color:#1a1a1a">Тест извещателя</div>
<svg style="left:556px;top:442.37px" width="9" height="10" viewBox="0 0 9 10"><path d="M1.8 3.6 L6.4 0.4 L8.4 1.4 L3.2 5.6 Z M0.6 8 L5.4 4.4 L7.4 5.4 L2.0 9.4 Z" fill="#ff2010" stroke="#ffcf30" stroke-width="0.9" stroke-linejoin="round"/></svg>
<div class="t" style="left:566.6px;top:440.44px;font-size:8.3px;color:#1a1a1a">Требуется обслуживание</div>
<svg style="left:556px;top:458.30000000000007px" width="9" height="10" viewBox="0 0 9 10"><path d="M1.8 3.6 L6.4 0.4 L8.4 1.4 L3.2 5.6 Z M0.6 8 L5.4 4.4 L7.4 5.4 L2.0 9.4 Z" fill="#ff2010" stroke="#ffcf30" stroke-width="0.9" stroke-linejoin="round"/></svg>
<div class="t" style="left:566.6px;top:456.37px;font-size:8.3px;color:#1a1a1a">ШС отключен</div>
<svg style="left:556px;top:474.23px" width="9" height="10" viewBox="0 0 9 10"><path d="M1.8 3.6 L6.4 0.4 L8.4 1.4 L3.2 5.6 Z M0.6 8 L5.4 4.4 L7.4 5.4 L2.0 9.4 Z" fill="#ff2010" stroke="#ffcf30" stroke-width="0.9" stroke-linejoin="round"/></svg>
<div class="t" style="left:566.6px;top:472.30px;font-size:8.3px;color:#1a1a1a">ШС подключен</div>
<svg style="left:0;top:0" width="915" height="550" viewBox="0 0 915 550"><line x1="550.4" y1="144.60" x2="555.5" y2="144.60" stroke="#c4c4c4"/><line x1="550.4" y1="160.53" x2="555.5" y2="160.53" stroke="#c4c4c4"/><line x1="550.4" y1="176.46" x2="555.5" y2="176.46" stroke="#c4c4c4"/><line x1="550.4" y1="192.39" x2="555.5" y2="192.39" stroke="#c4c4c4"/><line x1="550.4" y1="208.32" x2="555.5" y2="208.32" stroke="#c4c4c4"/><line x1="550.4" y1="224.25" x2="555.5" y2="224.25" stroke="#c4c4c4"/><line x1="550.4" y1="240.18" x2="555.5" y2="240.18" stroke="#c4c4c4"/><line x1="550.4" y1="256.11" x2="555.5" y2="256.11" stroke="#c4c4c4"/><line x1="550.4" y1="272.04" x2="555.5" y2="272.04" stroke="#c4c4c4"/><line x1="550.4" y1="287.97" x2="555.5" y2="287.97" stroke="#c4c4c4"/><line x1="550.4" y1="303.90" x2="555.5" y2="303.90" stroke="#c4c4c4"/><line x1="550.4" y1="319.83" x2="555.5" y2="319.83" stroke="#c4c4c4"/><line x1="550.4" y1="335.76" x2="555.5" y2="335.76" stroke="#c4c4c4"/><line x1="550.4" y1="351.69" x2="555.5" y2="351.69" stroke="#c4c4c4"/><line x1="550.4" y1="367.62" x2="555.5" y2="367.62" stroke="#c4c4c4"/><line x1="550.4" y1="383.55" x2="555.5" y2="383.55" stroke="#c4c4c4"/><line x1="550.4" y1="399.48" x2="555.5" y2="399.48" stroke="#c4c4c4"/><line x1="550.4" y1="415.41" x2="555.5" y2="415.41" stroke="#c4c4c4"/><line x1="550.4" y1="431.34" x2="555.5" y2="431.34" stroke="#c4c4c4"/><line x1="550.4" y1="447.27" x2="555.5" y2="447.27" stroke="#c4c4c4"/><line x1="550.4" y1="463.20" x2="555.5" y2="463.20" stroke="#c4c4c4"/><line x1="550.4" y1="479.13" x2="555.5" y2="479.13" stroke="#c4c4c4"/><line x1="550.4" y1="134.7" x2="550.4" y2="479.13" stroke="#c4c4c4"/></svg>
<div class="ab" style="left:4px;top:534.5px;width:907px;height:1px;background:#fff"></div>
<div class="t" style="left:4.4px;top:537.47px;font-size:8.3px;">Сервер:</div>
<div class="ab" style="left:40.5px;top:536.4px;width:74px;height:10px;background:#d0ccc4;border-top:1px solid #808080;border-left:1px solid #808080;border-right:1px solid #fff;border-bottom:1px solid #fff"></div>
<div class="t" style="left:42px;top:537.39px;font-size:8.4px;">172.17.0.120</div>
<div class="t" style="left:117px;top:537.47px;font-size:8.3px;">Пользователь:</div>
<div class="ab" style="left:181px;top:536.4px;width:86.5px;height:10px;background:#d0ccc4;border-top:1px solid #808080;border-left:1px solid #808080;border-right:1px solid #fff;border-bottom:1px solid #fff"></div>
<div class="t" style="left:183px;top:537.47px;font-size:8.3px;">ADMIN</div>
<div class="t" style="left:271px;top:537.47px;font-size:8.3px;">Статус:</div>
<div class="ab" style="left:305px;top:536.4px;width:605px;height:10px;border-top:1px solid #808080;border-left:1px solid #808080;border-right:1px solid #fff;border-bottom:1px solid #fff"></div>
</body></html>
